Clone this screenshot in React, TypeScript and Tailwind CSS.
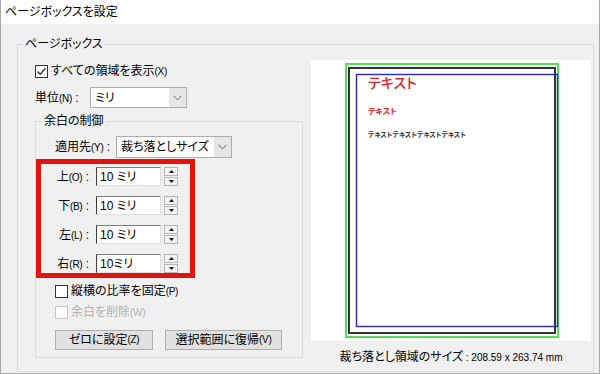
import React from 'react';

function Mn({ k }: { k: string }) {
  return <span className="text-[10px] font-['Liberation_Sans',sans-serif] tracking-[-0.3px]">({k})</span>;
}

function CheckBox({ checked = false, disabled = false }: { checked?: boolean; disabled?: boolean }) {
  return (
    <span
      className={`w-[13px] h-[13px] shrink-0 border bg-white flex items-center justify-center ${
        disabled ? 'border-[#c4c4c4]' : 'border-[#333333]'
      }`}
    >
      {checked && (
        <svg width="11" height="11" viewBox="0 0 11 11" fill="none" stroke="#333" strokeWidth="1.4">
          <polyline points="1.5 5.5 4.2 8.3 9.5 2.2" />
        </svg>
      )}
    </span>
  );
}

function Select({ value, width }: { value: string; width: string }) {
  return (
    <div className={`${width} h-full flex border border-[#acacac] bg-white`}>
      <span className="flex-1 pl-[4px] flex items-center leading-none">{value}</span>
      <span className="w-[17px] bg-[#e6e6e6] flex items-center justify-center">
        <svg width="9" height="6" viewBox="0 0 9 6" fill="none" stroke="#606060" strokeWidth="1">
          <polyline points="0.5 0.8 4.5 4.8 8.5 0.8" />
        </svg>
      </span>
    </div>
  );
}

function Spinner() {
  return (
    <div className="w-[14px] h-[19px] flex flex-col gap-[1px]">
      <span className="h-[9px] border border-[#b5b5b5] bg-[#f3f3f3] flex items-center justify-center">
        <svg width="5" height="3" viewBox="0 0 5 3">
          <polygon points="2.5 0 5 3 0 3" fill="#111" />
        </svg>
      </span>
      <span className="h-[9px] border border-[#b5b5b5] bg-[#f3f3f3] flex items-center justify-center">
        <svg width="5" height="3" viewBox="0 0 5 3">
          <polygon points="0 0 5 0 2.5 3" fill="#111" />
        </svg>
      </span>
    </div>
  );
}

function MarginRow({ label, k, value }: { label: string; k: string; value: string }) {
  return (
    <div className="h-[19px] flex items-center">
      <span className="w-[48px] text-right whitespace-nowrap">
        {label}
        <Mn k={k} /> :
      </span>
      <div className="ml-[7px] w-[65px] h-full bg-white border border-t-[#7a7a7a] border-l-[#3c3c3c] border-r-[#dedede] border-b-[#dedede] flex items-center pl-[3px] leading-none">
        {value}
      </div>
      <div className="ml-[3px]">
        <Spinner />
      </div>
    </div>
  );
}

function Preview() {
  return (
    <svg width="280" height="281" viewBox="0 0 280 281" className="block">
      <rect x="0" y="0" width="280" height="281" fill="#ffffff" />
      <rect x="35" y="4" width="212" height="273" fill="none" stroke="#52e052" strokeWidth="2" />
      <rect x="38" y="8" width="206" height="265" fill="none" stroke="#333333" strokeWidth="2" />
      <rect x="45.5" y="14.5" width="201" height="252" fill="none" stroke="#2a2ab8" strokeWidth="1.4" />
      <text x="57" y="28" fontSize="14" fill="#e4232b" fontFamily="Noto Sans CJK JP, sans-serif" fontWeight="500">
        テキスト
      </text>
      <text x="57" y="54" fontSize="8" fill="#e4232b" fontFamily="Noto Sans CJK JP, sans-serif" fontWeight="700">
        テキスト
      </text>
      <text
        x="57"
        y="77"
        fontSize="7"
        fill="#333"
        fontFamily="Noto Sans CJK JP, sans-serif"
        fontWeight="700"
        textLength="98"
        lengthAdjust="spacingAndGlyphs"
      >
        テキストテキストテキストテキスト
      </text>
    </svg>
  );
}

export default function App() {
  return (
    <div className="w-[600px] h-[374px] bg-[#f0f0f0] border-l border-r border-b border-[#a9a9a9] flex flex-col overflow-hidden text-[12px] text-black font-['Liberation_Sans','Noto_Sans_CJK_JP',sans-serif] [font-feature-settings:'palt']">
      <div className="h-[24px] shrink-0 bg-white flex items-center pl-[4px] leading-none">ページボックスを設定</div>

      <div className="flex-1 pt-[20px] pl-[16px] pr-[5px]">
        <div className="relative h-[328px] border border-[#dcdcdc] flex">
          <span className="absolute -top-[9px] left-[5px] bg-[#f0f0f0] px-[2px] leading-[16px]">ページボックス</span>

          {/* left column */}
          <div className="w-[285px] shrink-0 pl-[17px] pt-[18px] flex flex-col">
            <div className="h-[16px] flex items-center gap-[3px]">
              <CheckBox checked />
              <span className="whitespace-nowrap">
                すべての領域を表示<Mn k="X" />
              </span>
            </div>

            <div className="mt-[8px] h-[21px] flex items-center">
              <span className="w-[55px] whitespace-nowrap">
                単位<Mn k="N" /> :
              </span>
              <Select value="ミリ" width="w-[97px]" />
            </div>

            <div className="mt-[13px] relative w-[268px] h-[237px] border border-[#dcdcdc] flex flex-col">
              <span className="absolute -top-[9px] left-[6px] bg-[#f0f0f0] px-[2px] leading-[16px]">余白の制御</span>

              <div className="mt-[14px] h-[22px] flex items-center pl-[19px]">
                <span className="w-[61px] whitespace-nowrap">
                  適用先<Mn k="Y" /> :
                </span>
                <Select value="裁ち落としサイズ" width="w-[116px]" />
              </div>

              <div className="mt-[1px] w-[159px] border-[5px] border-[#e3140d] pt-[3px] flex flex-col gap-[10px]">
                <MarginRow label="上" k="O" value="10 ミリ" />
                <MarginRow label="下" k="B" value="10 ミリ" />
                <MarginRow label="左" k="L" value="10 ミリ" />
                <MarginRow label="右" k="R" value="10ミリ" />
              </div>

              <div className="mt-[5px] h-[16px] pl-[19px] flex items-center gap-[3px]">
                <CheckBox />
                <span className="whitespace-nowrap">
                  縦横の比率を固定<Mn k="P" />
                </span>
              </div>

              <div className="mt-[5px] h-[16px] pl-[19px] flex items-center gap-[3px] text-[#b0b0b0]">
                <CheckBox disabled />
                <span className="whitespace-nowrap">
                  余白を削除<Mn k="W" />
                </span>
              </div>

              <div className="mt-[10px] pl-[19px] flex gap-[12px]">
                <button className="w-[98px] h-[20px] bg-[#e1e1e1] border border-[#adadad] flex items-center justify-center leading-none">
                  ゼロに設定<Mn k="Z" />
                </button>
                <button className="w-[117px] h-[20px] bg-[#e1e1e1] border border-[#adadad] flex items-center justify-center leading-none">
                  選択範囲に復帰<Mn k="V" />
                </button>
              </div>
            </div>
          </div>

          {/* preview column */}
          <div className="flex-1 ml-[8px] pt-[15px] flex flex-col">
            <Preview />
            <div className="mt-[8px] w-[280px] text-center leading-[16px] whitespace-nowrap">
              裁ち落とし領域のサイズ
              <span className="text-[10px]"> : 208.59 x 263.74 mm</span>
            </div>
          </div>
        </div>
      </div>
    </div>
  );
}
